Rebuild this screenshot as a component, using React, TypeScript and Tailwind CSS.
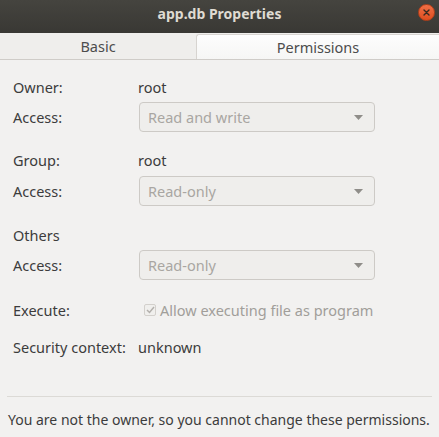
import React from "react";

function Dropdown({ value }: { value: string }) {
  return (
    <div className="flex h-[30px] w-[236px] items-center justify-between rounded-[4px] border border-[#cdcac6] bg-[#efeeec] pl-[8px] pr-[11px] text-[#a9a6a2]">
      <span>{value}</span>
      <svg width="9" height="5" viewBox="0 0 9 5">
        <polygon points="0,0 9,0 4.5,5" fill="#8f8d89" />
      </svg>
    </div>
  );
}

export default function App() {
  return (
    <div
      className="flex h-[437px] w-[439px] flex-col overflow-hidden bg-[#f2f1f0] text-[14.5px] leading-[20px] text-[#3c3c3c]"
      style={{ fontFamily: '"Noto Sans", "Open Sans", sans-serif' }}
    >
      {/* Title bar */}
      <div className="relative flex h-[33px] shrink-0 items-center justify-center bg-gradient-to-b from-[#45443f] to-[#393834] pb-[6px]">
        <span className="text-[14px] font-bold text-[#dfdbd2]">app.db Properties</span>
        <div className="absolute right-[4px] top-[4px] flex h-[17px] w-[17px] items-center justify-center rounded-full border border-[#b5401a] bg-gradient-to-b from-[#f06f45] to-[#df4d1d]">
          <svg width="7" height="7" viewBox="0 0 7 7">
            <path d="M1 1 L6 6 M6 1 L1 6" stroke="#3a2a20" strokeWidth="1.4" strokeLinecap="round" />
          </svg>
        </div>
      </div>

      {/* Tabs */}
      <div className="flex h-[27px] shrink-0 border-b border-[#cfccc8] bg-[#efeeec]">
        <div className="flex w-[196px] items-center justify-center text-[#4c4c4c]">Basic</div>
        <div className="mt-[1px] flex flex-1 items-center justify-center rounded-tl-[3px] border-l border-t border-[#d7d4d0] bg-gradient-to-b from-[#fdfdfd] to-[#f6f6f5] text-[#4c4c4c]">
          Permissions
        </div>
      </div>

      {/* Content */}
      <div className="flex h-[336px] shrink-0 flex-col pl-[13px] pt-[17px]">
        <div className="flex h-[20px] items-center">
          <span className="w-[125px]">Owner:</span>
          <span>root</span>
        </div>
        <div className="mt-[5px] flex items-center">
          <span className="w-[126px]">Access:</span>
          <Dropdown value="Read and write" />
        </div>

        <div className="mt-[18px] flex h-[20px] items-center">
          <span className="w-[125px]">Group:</span>
          <span>root</span>
        </div>
        <div className="mt-[6px] flex items-center">
          <span className="w-[126px]">Access:</span>
          <Dropdown value="Read-only" />
        </div>

        <div className="mt-[19px] flex h-[20px] items-center">
          <span>Others</span>
        </div>
        <div className="mt-[5px] flex items-center">
          <span className="w-[126px]">Access:</span>
          <Dropdown value="Read-only" />
        </div>

        <div className="mt-[20px] flex h-[20px] items-center">
          <span className="w-[131px]">Execute:</span>
          <div className="flex h-[12px] w-[12px] items-center justify-center rounded-[2px] border border-[#d3d0cc] bg-[#f0efed]">
            <svg width="9" height="8" viewBox="0 0 9 8">
              <path d="M1 4 L3.5 6.5 L8 1" stroke="#b3b0ac" strokeWidth="1.5" fill="none" />
            </svg>
          </div>
          <span className="ml-[4px] text-[#a19e9a]">Allow executing file as program</span>
        </div>

        <div className="mt-[17px] flex h-[20px] items-center">
          <span className="w-[125px]">Security context:</span>
          <span>unknown</span>
        </div>
      </div>

      {/* Footer */}
      <div className="mx-[7px] shrink-0 border-t border-[#dcdad6]" />
      <div className="flex h-[40px] shrink-0 items-center whitespace-nowrap pl-[8px] pt-[6px] text-[14px]">
        You are not the owner, so you cannot change these permissions.
      </div>
    </div>
  );
}
